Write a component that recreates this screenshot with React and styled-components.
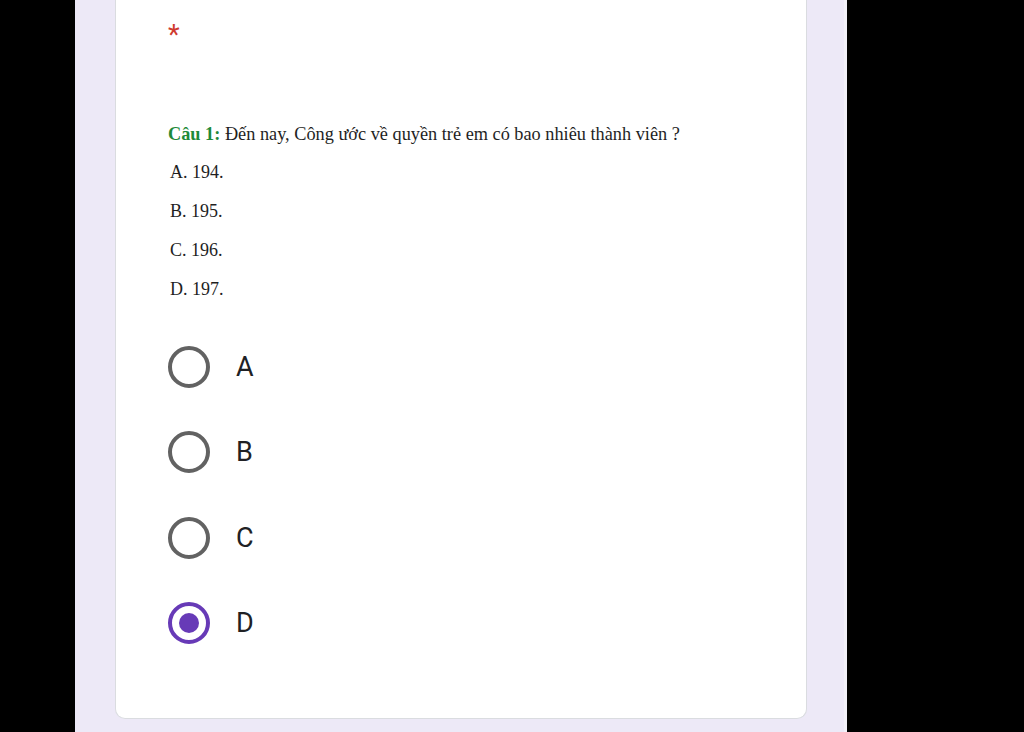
import React from 'react';
import styled, { createGlobalStyle } from 'styled-components';

const GlobalStyle = createGlobalStyle`
  html, body {
    margin: 0;
    padding: 0;
    background: #000;
  }
  body {
    font-family: Roboto, "Liberation Sans", sans-serif;
  }
`;

const Screen = styled.div`
  display: flex;
  height: 732px;
  overflow: hidden;
  background: #000;
`;

const Column = styled.div`
  margin-left: 75px;
  width: 772px;
  height: 100%;
  background: #ede9f7;
  border-right: 3px solid #f3f1f8;
  box-sizing: border-box;
  padding: 0 37px 13px 40px;
  display: flex;
`;

const Card = styled.div`
  flex: 1;
  background: #fff;
  border: 1px solid #dadce0;
  border-top: none;
  border-radius: 0 0 10px 10px;
  padding: 22px 0 0 52px;
  display: flex;
  flex-direction: column;
`;

const Required = styled.span`
  color: #cf3a2e;
  font-family: Roboto, sans-serif;
  font-size: 27px;
  line-height: 26px;
  height: 26px;
`;

const Question = styled.div`
  margin-top: 76px;
  font-family: "Liberation Serif", "Times New Roman", serif;
  font-size: 18.3px;
  line-height: 20px;
  color: #1f1f1f;
`;

const Label = styled.b`
  color: #1e8a3a;
`;

const Choices = styled.div`
  margin-top: 9px;
  display: flex;
  flex-direction: column;
  padding-left: 2px;
`;

const Choice = styled.div`
  font-family: "Liberation Serif", "Times New Roman", serif;
  font-size: 18px;
  line-height: 39px;
  color: #1f1f1f;
`;

const Radios = styled.div`
  margin-top: 37px;
  display: flex;
  flex-direction: column;
  gap: 43.3px;
`;

const RadioRow = styled.label`
  display: flex;
  align-items: center;
  gap: 26px;
  height: 42px;
`;

const Circle = styled.span`
  width: 42px;
  height: 42px;
  box-sizing: border-box;
  border-radius: 50%;
  border: 4px solid ${p => (p.$checked ? '#673ab7' : '#626262')};
  display: flex;
  align-items: center;
  justify-content: center;
  &::after {
    content: '';
    width: 20px;
    height: 20px;
    border-radius: 50%;
    background: #673ab7;
    display: ${p => (p.$checked ? 'block' : 'none')};
  }
`;

const RadioText = styled.span`
  font-family: Roboto, sans-serif;
  font-size: 27px;
  color: #202124;
`;

const options = ['A. 194.', 'B. 195.', 'C. 196.', 'D. 197.'];
const answers = ['A', 'B', 'C', 'D'];

export default function App() {
  const selected = 'D';
  return (
    <>
      <GlobalStyle />
      <Screen>
        <Column>
          <Card>
            <Required>*</Required>
            <Question>
              <Label>Câu 1:</Label> Đến nay, Công ước về quyền trẻ em có bao nhiêu thành viên ?
            </Question>
            <Choices>
              {options.map(o => (
                <Choice key={o}>{o}</Choice>
              ))}
            </Choices>
            <Radios>
              {answers.map(a => (
                <RadioRow key={a}>
                  <Circle $checked={a === selected} />
                  <RadioText>{a}</RadioText>
                </RadioRow>
              ))}
            </Radios>
          </Card>
        </Column>
      </Screen>
    </>
  );
}
